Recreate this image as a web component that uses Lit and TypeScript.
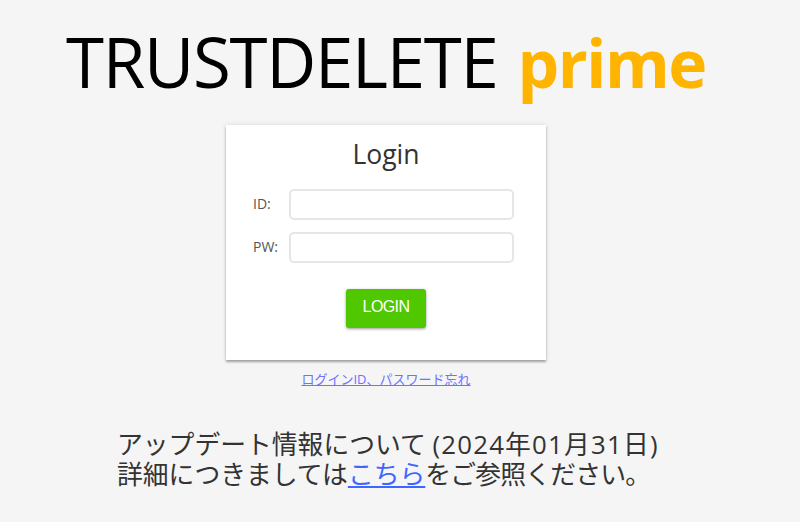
import { LitElement, html, css } from "lit";
import { customElement } from "lit/decorators.js";

@customElement("app-root")
export class AppRoot extends LitElement {
  static styles = css`
    :host {
      display: block;
      width: 800px;
      height: 522px;
      overflow: hidden;
      background: #f5f5f5;
      font-family: "Open Sans", "Noto Sans CJK JP", sans-serif;
      color: #333;
    }
    .logo {
      display: flex;
      align-items: baseline;
      height: 125px;
      box-sizing: border-box;
      padding: 14px 0 0 66px;
      font-size: 69px;
      line-height: 95px;
      white-space: nowrap;
    }
    .logo .trust {
      color: #000;
      letter-spacing: -1.3px;
    }
    .logo .prime {
      margin-left: 20px;
      color: #ffb400;
      font-weight: 700;
      font-size: 66px;
      letter-spacing: -1.5px;
    }
    .card {
      width: 320px;
      height: 235px;
      margin-left: 226px;
      box-sizing: border-box;
      padding-top: 11px;
      background: #fff;
      box-shadow: 0 2px 2px rgba(0, 0, 0, 0.3), 0 0 5px rgba(0, 0, 0, 0.12);
    }
    h1 {
      margin: 0 0 17px;
      font-size: 26.5px;
      font-weight: 400;
      line-height: 36px;
      text-align: center;
      color: #333;
    }
    .row {
      display: flex;
      align-items: center;
      height: 31px;
      margin-bottom: 12px;
      padding-left: 27px;
      font-size: 14px;
      color: #555;
    }
    .row label {
      width: 36px;
      line-height: 29px;
      align-self: flex-start;
    }
    .row input {
      width: 225px;
      height: 31px;
      box-sizing: border-box;
      border: 2px solid #e6e6e6;
      border-radius: 5px;
      background: #fff;
      outline: none;
    }
    .actions {
      display: flex;
      justify-content: center;
      padding-top: 14px;
    }
    button {
      width: 80px;
      height: 39px;
      padding: 0 0 3px;
      border: 0;
      border-radius: 3px;
      background: #50c800;
      color: #fff;
      font-family: "Liberation Sans", sans-serif;
      font-size: 16px;
      letter-spacing: -0.6px;
      box-shadow: 0 1px 3px rgba(0, 0, 0, 0.4);
    }
    .forgot {
      width: 320px;
      margin: 10px 0 0 226px;
      font-size: 13px;
      line-height: 18px;
      text-align: center;
    }
    .forgot a {
      color: #6b73ff;
    }
    .notice {
      margin: 41px 0 0 117px;
      font-size: 25.8px;
      line-height: 30px;
      color: #333;
      white-space: nowrap;
    }
    .notice .date {
      letter-spacing: 1.2px;
    }
    .notice .rest {
      letter-spacing: -0.8px;
    }
    .notice a {
      color: #3f66ff;
    }
  `;

  render() {
    return html`
      <div class="logo">
        <span class="trust">TRUSTDELETE</span>
        <span class="prime">prime</span>
      </div>
      <div class="card">
        <h1>Login</h1>
        <div class="row"><label>ID:</label><input type="text" /></div>
        <div class="row"><label>PW:</label><input type="password" /></div>
        <div class="actions"><button>LOGIN</button></div>
      </div>
      <div class="forgot"><a href="#">ログインID、パスワード忘れ</a></div>
      <div class="notice">
        アップデート情報について <span class="date">(2024年01月31日)</span><br />
        詳細につきましては<a href="#">こちら</a><span class="rest">をご参照ください。</span>
      </div>
    `;
  }
}
